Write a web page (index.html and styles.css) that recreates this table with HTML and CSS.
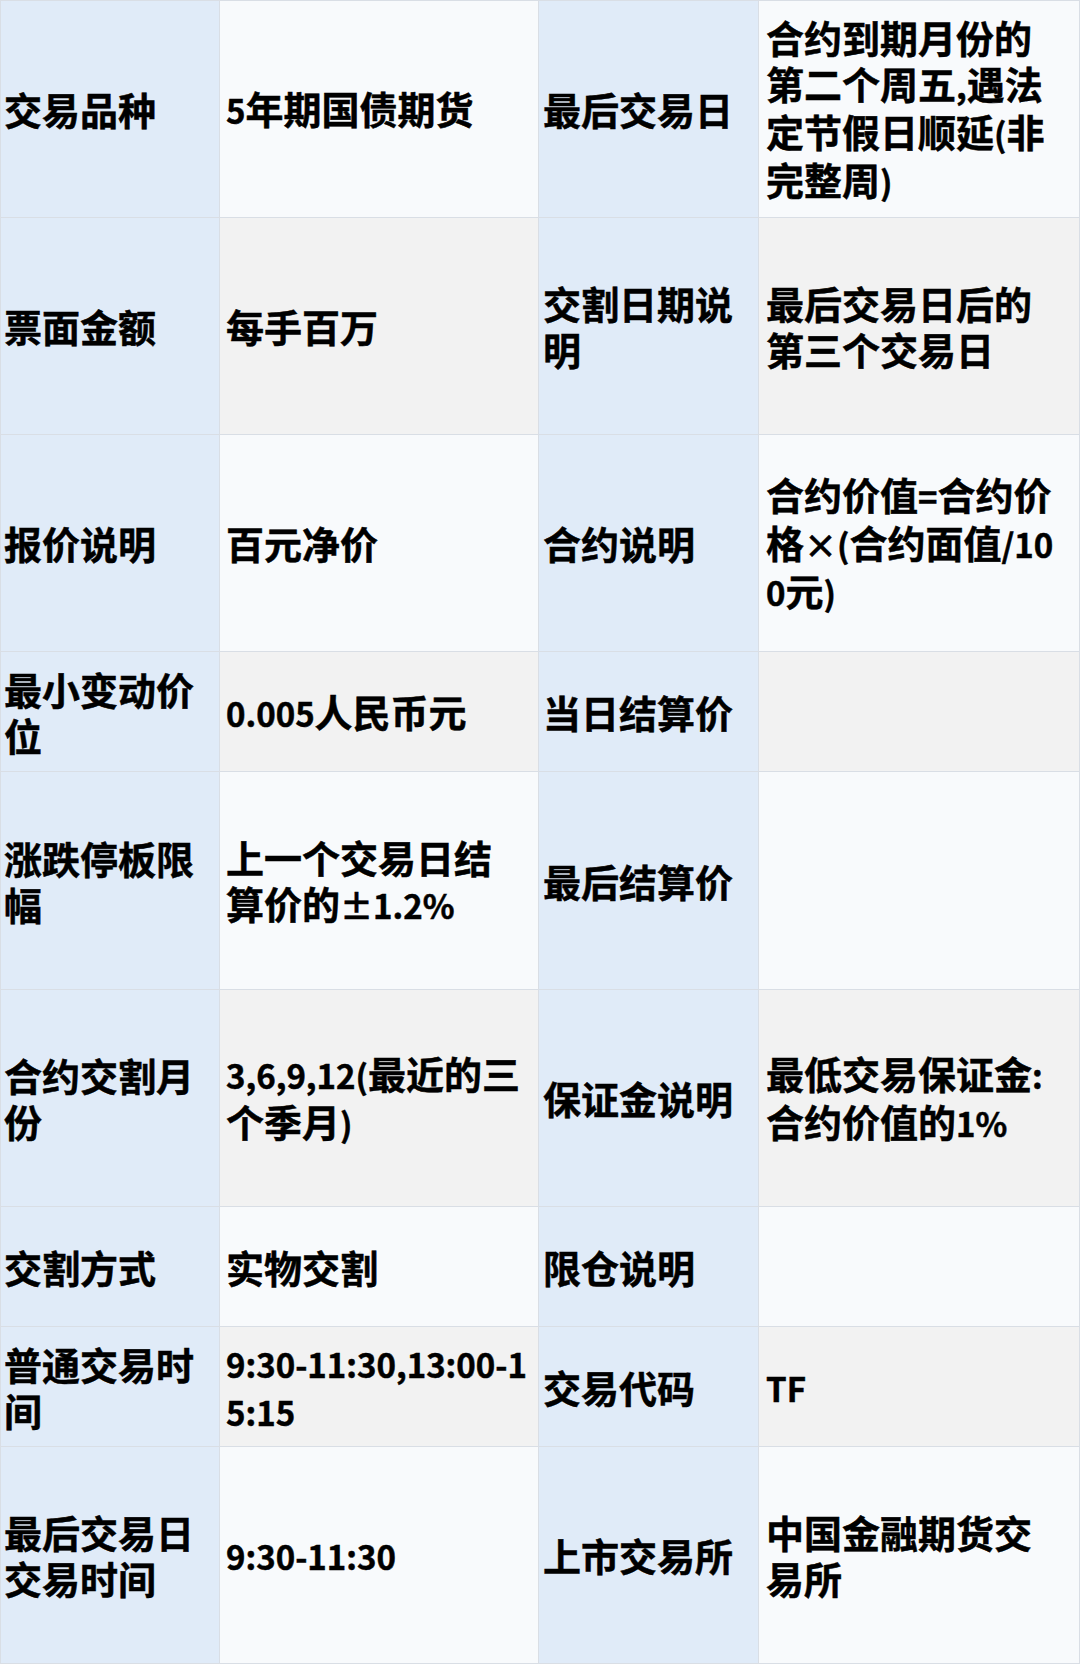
FILE: index.html
```html
<!DOCTYPE html>
<html lang="zh-CN">
<head>
<meta charset="utf-8">
<title>5年期国债期货 合约说明</title>
<link rel="stylesheet" href="styles.css">
</head>
<body>
<div class="spec">
  <div class="cell k c1">交易品种</div>
  <div class="cell v c2"><p><span class="num">5</span>年期国债期货</p></div>
  <div class="cell k c3">最后交易日</div>
  <div class="cell v c4"><p>合约到期月份的第二个周五<span class="num">,</span>遇法定节假日顺延<span class="num">(</span>非完整周<span class="num">)</span></p></div>

  <div class="cell k c1">票面金额</div>
  <div class="cell v alt c2">每手百万</div>
  <div class="cell k c3">交割日期说明</div>
  <div class="cell v alt c4">最后交易日后的第三个交易日</div>

  <div class="cell k c1">报价说明</div>
  <div class="cell v c2">百元净价</div>
  <div class="cell k c3">合约说明</div>
  <div class="cell v c4"><p>合约价值<span class="num">=</span>合约价格<span class="num">×(</span>合约面值<span class="num">/100</span>元<span class="num">)</span></p></div>

  <div class="cell k c1">最小变动价位</div>
  <div class="cell v alt c2"><p><span class="num">0.005</span>人民币元</p></div>
  <div class="cell k c3">当日结算价</div>
  <div class="cell v alt c4"></div>

  <div class="cell k c1">涨跌停板限幅</div>
  <div class="cell v c2"><p>上一个交易日结算价的<span class="num">±1.2%</span></p></div>
  <div class="cell k c3">最后结算价</div>
  <div class="cell v c4"></div>

  <div class="cell k c1">合约交割月份</div>
  <div class="cell v alt c2"><p><span class="num">3,6,9,12(</span>最近的三个季月<span class="num">)</span></p></div>
  <div class="cell k c3">保证金说明</div>
  <div class="cell v alt c4"><p>最低交易保证金<span class="num">:</span>合约价值的<span class="num">1%</span></p></div>

  <div class="cell k c1">交割方式</div>
  <div class="cell v c2">实物交割</div>
  <div class="cell k c3">限仓说明</div>
  <div class="cell v c4"></div>

  <div class="cell k c1">普通交易时间</div>
  <div class="cell v alt c2"><p><span class="num">9:30-11:30,13:00-15:15</span></p></div>
  <div class="cell k c3">交易代码</div>
  <div class="cell v alt c4"><p><span class="num">TF</span></p></div>

  <div class="cell k c1">最后交易日交易时间</div>
  <div class="cell v c2"><p><span class="num">9:30-11:30</span></p></div>
  <div class="cell k c3">上市交易所</div>
  <div class="cell v c4">中国金融期货交易所</div>
</div>
</body>
</html>
```

FILE: styles.css
```css
html, body {
  margin: 0;
  padding: 0;
  background: #ffffff;
}

.spec {
  display: grid;
  grid-template-columns: 219px 319px 220px 321px;
  grid-template-rows: 217px 217px 217px 120px 218px 217px 120px 120px 217px;
  border-top: 1px solid #d9dee5;
  border-left: 1px solid #d9dee5;
  width: 1079px;
  font-family: "Noto Sans CJK SC", "Noto Sans", sans-serif;
  font-weight: 700;
  font-size: 38px;
  line-height: 46px;
  color: #000000;
  -webkit-text-stroke: 0.5px #000000;
}

.cell {
  display: flex;
  align-items: center;
  box-sizing: border-box;
  border-right: 1px solid #d9dee5;
  border-bottom: 1px solid #d9dee5;
  word-break: break-all;
  overflow-wrap: anywhere;
}

.cell p {
  margin: 0;
}

.num {
  font-size: 33px;
}

.k {
  background: #e0ebf8;
}

.v {
  background: #f8fafc;
}

.v.alt {
  background: #f2f2f2;
}

.c1 {
  padding: 0 10px 0 3px;
}

.c2 {
  padding: 0 10px 0 6px;
}

.c3 {
  padding: 0 10px 0 4px;
}

.c4 {
  padding: 0 18px 0 7px;
}
```
